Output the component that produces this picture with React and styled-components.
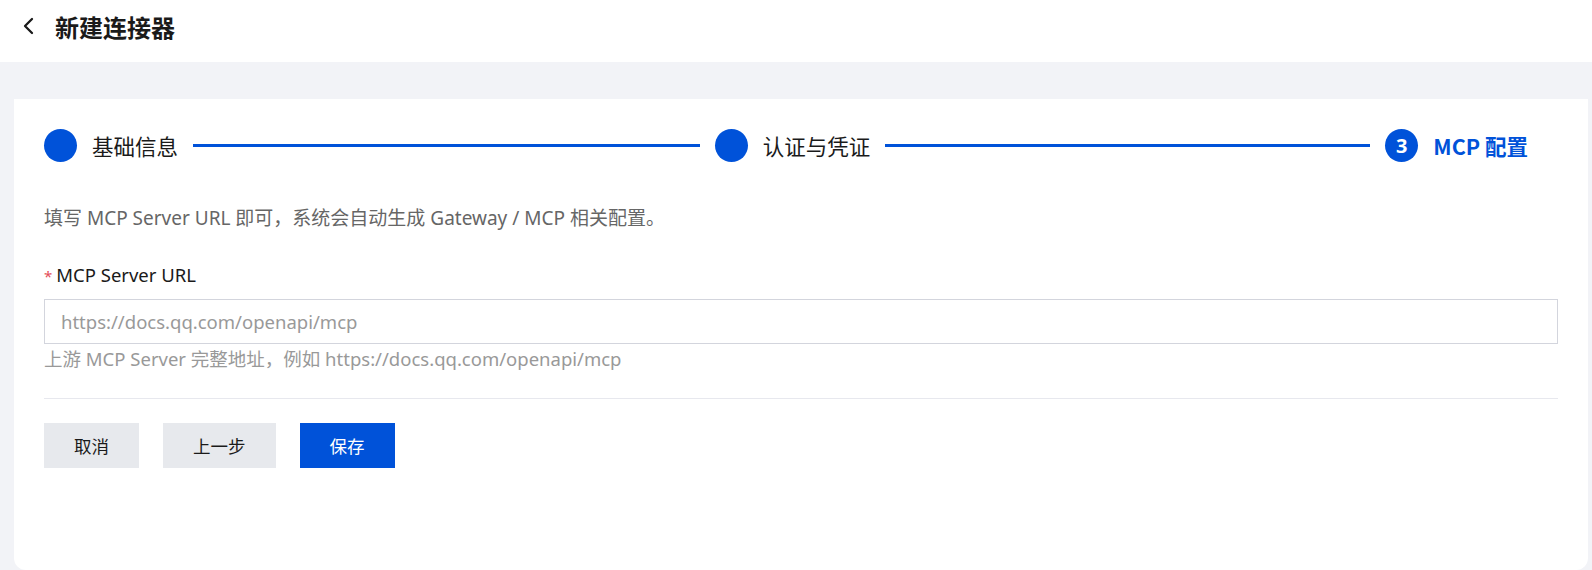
import React, { useState } from 'react';
import styled, { createGlobalStyle } from 'styled-components';

const GlobalStyle = createGlobalStyle`
  html, body {
    margin: 0;
    padding: 0;
    background: #f2f3f7;
    font-family: "Noto Sans", "Noto Sans CJK SC", sans-serif;
    color: #1a1a1a;
  }
  * {
    box-sizing: border-box;
  }
`;

const Page = styled.div`
  min-height: 570px;
  display: flex;
  flex-direction: column;
`;

const Header = styled.header`
  height: 62px;
  background: #fff;
  display: flex;
  align-items: center;
  gap: 20px;
  padding: 0 0 10px 22px;
`;

const BackButton = styled.button`
  border: none;
  background: none;
  padding: 0;
  display: flex;
  align-items: center;
  cursor: pointer;
  color: #1a1a1a;
`;

const Title = styled.h1`
  margin: 0;
  font-size: 24px;
  font-weight: 700;
  font-family: "Noto Sans CJK SC", sans-serif;
  color: #1a1a1a;
`;

const Content = styled.main`
  flex: 1;
  display: flex;
  padding: 37px 4px 0 14px;
`;

const Card = styled.section`
  flex: 1;
  background: #fff;
  border-radius: 0 0 12px 12px;
  padding: 30px 30px 40px;
`;

const Steps = styled.div`
  display: flex;
  align-items: center;
  padding-right: 30px;
`;

const StepItem = styled.div`
  display: flex;
  align-items: center;
  gap: 15px;
  flex: ${(p) => (p.$last ? '0 0 auto' : '1')};
  padding-right: ${(p) => (p.$last ? '0' : '15px')};
`;

const StepDot = styled.span`
  width: 33px;
  height: 33px;
  border-radius: 50%;
  background: #0052d9;
  color: #fff;
  font-size: 20px;
  font-weight: 700;
  display: flex;
  align-items: center;
  justify-content: center;
  flex-shrink: 0;
`;

const StepLabel = styled.span`
  font-size: 21.5px;
  font-family: "Noto Sans CJK SC", sans-serif;
  font-weight: ${(p) => (p.$active ? 700 : 400)};
  color: ${(p) => (p.$active ? '#0052d9' : '#1a1a1a')};
  white-space: nowrap;
`;

const StepLine = styled.span`
  flex: 1;
  height: 2.5px;
  background: #0052d9;
`;

const Description = styled.p`
  margin: 43px 0 0;
  font-size: 19px;
  line-height: 27px;
  color: #666;
`;

const Field = styled.div`
  margin-top: 29px;
`;

const Label = styled.label`
  display: flex;
  align-items: baseline;
  gap: 4px;
  font-size: 18.5px;
  line-height: 27px;
  color: #1a1a1a;
  margin-bottom: 9px;
`;

const Required = styled.span`
  color: #e34d59;
  font-size: 15px;
`;

const Input = styled.input`
  display: block;
  width: 100%;
  height: 45px;
  padding: 0 16px;
  border: 1px solid #d3d5dd;
  border-radius: 0;
  font-family: inherit;
  font-size: 18.5px;
  color: #1a1a1a;
  outline: none;
  &::placeholder {
    color: #999;
  }
  &:focus {
    border-color: #0052d9;
  }
`;

const Help = styled.div`
  margin-top: 2px;
  font-size: 18.5px;
  line-height: 25px;
  color: #999;
`;

const Divider = styled.hr`
  border: none;
  height: 1px;
  background: #e7e8ee;
  margin: 27px 0 24px;
`;

const Actions = styled.div`
  display: flex;
  gap: 24px;
`;

const Button = styled.button`
  height: 45px;
  padding: 0 30px;
  border: none;
  border-radius: 0;
  font-family: "Noto Sans CJK SC", sans-serif;
  font-size: 17.5px;
  cursor: pointer;
  background: ${(p) => (p.$primary ? '#0052d9' : '#e7e9ed')};
  color: ${(p) => (p.$primary ? '#fff' : '#1a1a1a')};
  &:hover {
    background: ${(p) => (p.$primary ? '#266fe8' : '#dcdfe5')};
  }
`;

const ChevronLeft = () => (
  <svg width="13" height="18" viewBox="0 0 13 18" fill="none">
    <polyline points="10,2 3,9 10,16" stroke="currentColor" strokeWidth="2.3" strokeLinecap="round" strokeLinejoin="round" />
  </svg>
);

const steps = ['基础信息', '认证与凭证', 'MCP 配置'];

const App = () => {
  const [url, setUrl] = useState('');
  const current = 2;

  return (
    <Page>
      <GlobalStyle />
      <Header>
        <BackButton aria-label="返回">
          <ChevronLeft />
        </BackButton>
        <Title>新建连接器</Title>
      </Header>
      <Content>
        <Card>
          <Steps>
            {steps.map((name, i) => {
              const last = i === steps.length - 1;
              return (
                <StepItem key={name} $last={last}>
                  <StepDot>{i === current ? i + 1 : null}</StepDot>
                  <StepLabel $active={i === current}>{name}</StepLabel>
                  {!last && <StepLine />}
                </StepItem>
              );
            })}
          </Steps>
          <Description>填写 MCP Server URL 即可，系统会自动生成 Gateway / MCP 相关配置。</Description>
          <Field>
            <Label>
              <Required>*</Required>
              MCP Server URL
            </Label>
            <Input
              type="text"
              placeholder="https://docs.qq.com/openapi/mcp"
              value={url}
              onChange={(e) => setUrl(e.target.value)}
            />
            <Help>上游 MCP Server 完整地址，例如 https://docs.qq.com/openapi/mcp</Help>
          </Field>
          <Divider />
          <Actions>
            <Button>取消</Button>
            <Button>上一步</Button>
            <Button $primary>保存</Button>
          </Actions>
        </Card>
      </Content>
    </Page>
  );
};

export default App;
